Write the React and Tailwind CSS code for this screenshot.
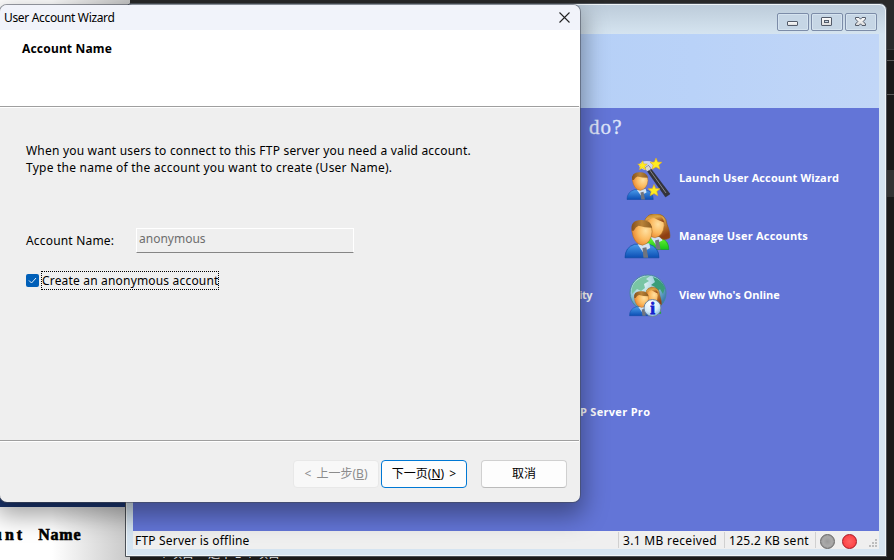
import React from "react";

function Person({ female = false }) {
  return (
    <g>
      <path
        d={female ? "M3 40 Q3 29 12 27 L24 27 Q33 30 33 40 Z" : "M0 40 Q0 29 10 26 L25 26 Q35 29 35 40 Z"}
        fill={female ? "url(#greenCoat)" : "url(#blueCoat)"}
        stroke={female ? "#159a1c" : "#0c48a0"}
        strokeWidth=".7"
      />
      <path d="M13 26 L25 25 L26 30 L22 32 L21 38 Z" fill="#d3e2f4" />
      <path d="M18 30 L22 29 L24 40 L19 40 Z" fill="#70747e" />
      {female && <path d="M7 20 Q3 2 17 0 Q30 0 31 12 Q35 22 34 27 Q27 31 23 26 Z" fill="url(#blond)" stroke="#8b5a20" strokeWidth=".7" />}
      <path d="M7 12 Q7 2 17 2 Q28 2 28 13 Q27 25 18 27 Q9 26 7 12 Z" fill="url(#skin)" stroke="#a56c26" strokeWidth=".6" />
      <path
        d={female ? "M7 11 Q7 1 17 1 Q26 1 28 10 Q22 8 17 5 Q12 5 7 11 Z" : "M7 12 Q5 1 17 1 Q27 1 28 9 Q20 9 14 7 Q11 8 9 12 Z"}
        fill={female ? "url(#blond)" : "url(#hair)"}
      />
    </g>
  );
}

function Defs() {
  return (
    <svg className="absolute size-0" aria-hidden="true">
      <defs>
        <linearGradient id="blueCoat" x1="0" y1="0" x2="0" y2="1">
          <stop offset="0" stopColor="#4a9bea" />
          <stop offset="1" stopColor="#0b4eb4" />
        </linearGradient>
        <linearGradient id="greenCoat" x1="0" y1="0" x2="0" y2="1">
          <stop offset="0" stopColor="#69f532" />
          <stop offset="1" stopColor="#16c417" />
        </linearGradient>
        <linearGradient id="hair" x1="0" y1="0" x2="1" y2="0">
          <stop offset="0" stopColor="#85501c" />
          <stop offset=".5" stopColor="#b98238" />
          <stop offset="1" stopColor="#8a5c22" />
        </linearGradient>
        <linearGradient id="blond" x1="0" y1="0" x2=".5" y2="1">
          <stop offset="0" stopColor="#b57a25" />
          <stop offset=".45" stopColor="#dda648" />
          <stop offset="1" stopColor="#8f3f12" />
        </linearGradient>
        <radialGradient id="skin" cx=".68" cy=".4" r=".75">
          <stop offset="0" stopColor="#ffe0a0" />
          <stop offset=".5" stopColor="#fbba60" />
          <stop offset="1" stopColor="#e57a25" />
        </radialGradient>
        <radialGradient id="sea" cx=".35" cy=".25" r=".8">
          <stop offset="0" stopColor="#e6f6f3" />
          <stop offset=".5" stopColor="#9accdc" />
          <stop offset="1" stopColor="#286da6" />
        </radialGradient>
        <radialGradient id="badge" cx=".4" cy=".25" r=".8">
          <stop offset="0" stopColor="#ffffff" />
          <stop offset=".6" stopColor="#d4ebfa" />
          <stop offset="1" stopColor="#78afd9" />
        </radialGradient>
        <linearGradient id="glyph" x1="0" y1="0" x2="0" y2="1">
          <stop offset="0" stopColor="#ffffff" />
          <stop offset="1" stopColor="#dadada" />
        </linearGradient>
      </defs>
    </svg>
  );
}

const star = "M0 -6 L1.7 -2 L6 -1.8 L2.8 1 L3.9 5.3 L0 3 L-3.9 5.3 L-2.8 1 L-6 -1.8 L-1.7 -2 Z";

function WizardIcon() {
  return (
    <svg className="h-[46px] w-[48px]" viewBox="0 0 48 46">
      <g transform="translate(3 16.5) scale(.75 .7)"><Person /></g>
      <ellipse cx="23" cy="10.500" rx="8" ry="4.500" fill="#eef2f8" opacity=".75" />
      <path d="M21 13 L24.500 10.500 L46 39 L41.500 42 Z" fill="#34343a" stroke="#202024" strokeWidth=".4" />
      <path d="M25 14 L42 38" stroke="#85858b" strokeWidth="1" />
      <path d="M21 13 L24.500 10.500 L27 14 L23 16.500 Z" fill="#d9d8d2" />
      <g fill="#ffec22" stroke="#dfaa20" strokeWidth=".6">
        <path d={star} transform="translate(32 9)" />
        <path d={star} transform="translate(18.5 10.5) scale(.8)" />
        <path d={star} transform="translate(30 35.500)" />
      </g>
    </svg>
  );
}

function UsersIcon() {
  return (
    <svg className="h-[46px] w-[48px]" viewBox="0 0 48 46">
      <g transform="translate(14.500 -.5) scale(.92 .9)"><Person female /></g>
      <g transform="translate(1 5) scale(.97)"><Person /></g>
    </svg>
  );
}

function GlobeIcon() {
  return (
    <svg className="h-[46px] w-[48px]" viewBox="0 0 48 46">
      <circle cx="24" cy="21" r="18" fill="url(#sea)" stroke="#47869c" />
      <path d="M11 10 Q18 3 26 4 L22 7 L25 9 L20 12 L21 16 L17 19 L13 17 L8 22 Q7 15 11 10 Z" fill="#79c5a4" />
      <path d="M29 5 Q38 8 41 16 L39 22 L36 17 L33 20 L31 15 L27 13 L31 10 Z" fill="#3a9d78" />
      <g transform="translate(18 15) scale(.57 .66)"><Person female /></g>
      <g transform="translate(5.500 18.500) scale(.68 .63)"><Person /></g>
      <circle cx="28.500" cy="36" r="8.500" fill="url(#badge)" stroke="#71839b" strokeWidth="1" />
      <text x="28.500" y="41.500" textAnchor="middle" fontFamily="Liberation Serif, serif" fontWeight="bold" fontSize="17" fill="#1520ce" stroke="#1520ce" strokeWidth=".8">i</text>
    </svg>
  );
}

function CaptionButton({ children }) {
  return (
    <button className="grid h-[18px] w-8 place-items-center rounded-xs border border-[#7c8ca8] bg-[#c6d6e5] shadow-[inset_0_0_0_1px_#d5e3ef]">
      <svg className="h-4 w-[30px]" viewBox="0 0 30 16" fill="url(#glyph)" stroke="#535b69">{children}</svg>
    </button>
  );
}

const actions = [
  { label: "Launch User Account Wizard", Icon: WizardIcon, tracking: "tracking-[0.12px]" },
  { label: "Manage User Accounts", Icon: UsersIcon, tracking: "tracking-[0.2px]" },
  { label: "View Who's Online", Icon: GlobeIcon, tracking: "tracking-[-0.06px]" },
];

function ServerWindow() {
  return (
    <section className="absolute top-[3px] left-[125px] flex h-[554px] w-[762px] flex-col rounded-t-[7px] border border-[#4b5057] bg-[#d5e4f1] px-[7px] pb-[7px] shadow-[inset_0_0_0_1px_#f0f5f8]">
      <header className="-mx-[6px] mt-px flex h-[29px] shrink-0 justify-end gap-[2px] rounded-t-[6px] bg-linear-to-b from-[#bdccda] to-[#d5e4f0] pt-2 pr-[8px]">
        <CaptionButton><rect x="9.500" y="7.500" width="10" height="4" rx=".5" /></CaptionButton>
        <CaptionButton><rect x="9.500" y="3.500" width="10" height="8" rx=".5" /><rect x="12.500" y="6.500" width="4" height="2" fill="#c6d6e5" /></CaptionButton>
        <CaptionButton><path d="M9.500 3.500 H13 L14.500 5.200 L16 3.500 H19.500 V5 L17.200 7.500 L19.500 10 V11.500 H16 L14.500 9.800 L13 11.500 H9.500 V10 L11.800 7.500 L9.500 5 Z" /></CaptionButton>
      </header>
      <div className="h-[74px] shrink-0 bg-linear-to-r from-[#a9c8f2] via-[#b9d2f8] via-75% to-[#c1d6f7]" />
      <main className="flex min-h-0 flex-1 flex-col bg-[#6375d7] font-['Open_Sans'] text-[11px] font-bold text-white">
        <h1 className="ml-[456px] h-[47px] pt-[7px] font-['Liberation_Serif',serif] text-[21px] leading-6 font-normal tracking-[1.1px] text-[#dfe5fa] [-webkit-text-stroke:0.3px_#dfe5fa]">
          do?
        </h1>
        <div className="flex">
          <div className="w-[491px] pt-[132px]">
            <p className="ml-[446px] leading-4 tracking-[-0.4px]">ity</p>
          </div>
          <ul className="flex flex-col gap-[12.500px]">
            {actions.map(({ label, Icon, tracking }) => (
              <li key={label} className="flex h-[46px] items-center gap-[7px] whitespace-nowrap">
                <Icon /><span className={tracking}>{label}</span>
              </li>
            ))}
          </ul>
        </div>
        <p className="mt-[86px] ml-[447px] leading-4 tracking-[0.3px]">P Server Pro</p>
      </main>
      <footer className="flex h-[18px] shrink-0 items-center bg-[#efefef] pl-[2px] font-['Noto_Sans'] text-[12px] leading-[18px] whitespace-nowrap text-black">
        <span className="w-[483px] pt-[2px] tracking-[0.2px]">FTP Server is offline</span>
        <span className="h-4 w-[106px] border-l border-[#d0d0d0] pl-1 leading-[18px] tracking-[0.32px]">3.1 MB received</span>
        <span className="h-4 w-[91px] border-l border-[#d0d0d0] pl-1 leading-[18px] tracking-[0.27px]">125.2 KB sent</span>
        <span className="flex h-4 items-center gap-[7px] border-l border-[#d0d0d0] pt-[2px] pl-1">
          <i className="size-[15px] rounded-full border border-[#666] bg-radial from-[#9a9a9a] via-[#aaa] to-[#888]" />
          <i className="size-[15px] rounded-full border border-[#a51520] bg-radial from-[#ff6262] to-[#fa3039]" />
        </span>
        <svg className="mt-[6px] ml-[12px] h-[9px] w-[9px]" fill="#bdbdbd">
          <path d="M6 0h2v2h-2zM3 3h2v2h-2zM6 3h2v2h-2zM0 6h2v2h-2zM3 6h2v2h-2zM6 6h2v2h-2z" />
        </svg>
      </footer>
    </section>
  );
}

function AccountWizard() {
  return (
    <section className="absolute top-[5px] left-0 flex h-[497px] w-[580px] flex-col overflow-hidden rounded-[7px] bg-[#efefef] font-['Noto_Sans','Noto_Sans_CJK_SC',sans-serif] text-[12px] whitespace-nowrap text-black shadow-[0_0_0_1px_rgba(70,75,90,.55),0_10px_25px_4px_rgba(0,0,0,.36)]">
      <header className="flex h-[25px] shrink-0 items-center justify-between bg-[#f1f3fa] pr-[10px] pl-1">
        <span className="tracking-[-0.33px]">User Account Wizard</span>
        <svg className="size-[11px]" viewBox="0 0 11 11" stroke="#222" strokeWidth="1.1"><path d="M.5 .5 L10.500 10.500 M10.500 .5 L.5 10.500" /></svg>
      </header>
      <div className="h-[76px] shrink-0 bg-white pt-[10px] pl-[22px] leading-[18px] font-bold tracking-[0.18px]">Account Name</div>
      <div className="mr-px h-[2px] shrink-0 border-t border-[#9f9f9f] bg-white" />
      <div className="h-[332px] shrink-0 pt-[34px] pl-[26px]">
        <p className="leading-[17px] tracking-[0.2px]">When you want users to connect to this FTP server you need a valid account.</p>
        <p className="leading-[17px] tracking-[0.235px]">Type the name of the account you want to create (User Name).</p>
        <div className="mt-[52px] flex h-[25px] items-center">
          <label className="w-[110px] tracking-[0.18px]">Account Name:</label>
          <div className="h-[25px] w-[218px] border border-white border-b-[#858585] pl-[2px] leading-[20px] text-[#6d6d6d]">anonymous</div>
        </div>
        <div className="mt-[18px] flex h-[19px] items-center gap-[2px]">
          <span className="grid size-[13px] place-items-center rounded-[2px] bg-[#005fb8]">
            <svg className="size-[9px]" viewBox="0 0 9 9" fill="none" stroke="#e4effa"><path d="M1 4.500 L3.500 7 L8 2" /></svg>
          </span>
          <span className="h-[19px] w-[178px] border border-dotted border-black leading-[17px] tracking-[0.18px]">Create an anonymous account</span>
        </div>
      </div>
      <div className="mr-px h-[2px] shrink-0 border-t border-[#9f9f9f] bg-white" />
      <footer className="flex pt-[18px] pl-[293px]">
        <button className="h-7 w-[86px] rounded border border-[#e8e8e8] bg-[#f8f8f8] text-[#8c8c8c]"><span className="mr-[2px]">&lt;</span> 上一步(<u>B</u>)</button>
        <button className="ml-[2px] h-7 w-[86px] rounded border border-[#0078d4] bg-[#fdfdfd]">下一页(<u>N</u>) <span className="ml-[2px]">&gt;</span></button>
        <button className="ml-[14px] h-7 w-[86px] rounded border border-[#d0d0d0] border-b-[#bbb] bg-[#fdfdfd]">取消</button>
      </footer>
    </section>
  );
}

export default function App() {
  return (
    <div className="relative h-[560px] w-[894px] overflow-hidden bg-[#1a1a1a]">
      <Defs />
      <div className="absolute top-0 left-0 h-2 w-full bg-[#292929]" />
      <div className="absolute top-0 right-0 flex h-[200px] w-2 flex-col">
        <div className="h-[50px] border-b border-[#393939] bg-[#2a2a2a]" />
        <div className="h-[11px] border-b border-[#595959]" />
        <div className="h-[34px] border-b border-[#595959]" />
        <div className="mt-[75px] h-[27px] bg-[#333]" />
      </div>
      <div className="absolute top-0 left-0 h-[560px] w-[130px] bg-linear-to-r from-white from-40% to-[#c8c8c8]">
        <div className="mt-[498px] h-[9px] bg-[#1b3671]" />
        <p className="-ml-[7px] mt-[18px] flex gap-[13px] font-['Liberation_Serif',serif] text-[16px] leading-5 font-bold whitespace-nowrap text-black [-webkit-text-stroke:0.6px_black]">
          <span className="tracking-[3px]">unt</span>
          <span className="tracking-[0.8px]">Name</span>
        </p>
      </div>
      <p className="absolute top-[544px] left-[158px] flex gap-[14px] font-['Noto_Sans_CJK_SC',sans-serif] text-[12px] leading-[18px] whitespace-nowrap text-[#ddd]">
        <span>个项目</span><span>选中 1 个项目</span>
      </p>
      <ServerWindow />
      <AccountWizard />
    </div>
  );
}
